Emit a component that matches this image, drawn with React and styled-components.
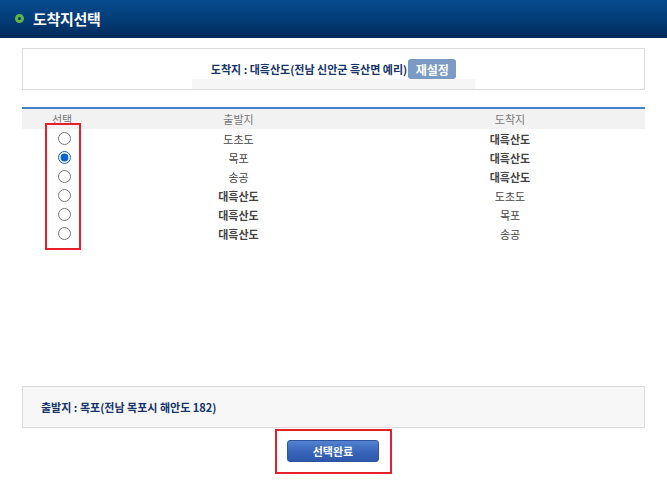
import React, { useState } from "react";
import styled, { createGlobalStyle } from "styled-components";

const GlobalStyle = createGlobalStyle`
  body {
    margin: 0;
    background: #fff;
    font-family: "Noto Sans CJK KR", "Noto Sans", sans-serif;
  }
`;

const routes = [
  { from: "도초도", to: "대흑산도", fromBold: false, toBold: true },
  { from: "목포", to: "대흑산도", fromBold: false, toBold: true },
  { from: "송공", to: "대흑산도", fromBold: false, toBold: true },
  { from: "대흑산도", to: "도초도", fromBold: true, toBold: false },
  { from: "대흑산도", to: "목포", fromBold: true, toBold: false },
  { from: "대흑산도", to: "송공", fromBold: true, toBold: false },
];

export default function App() {
  const [selected, setSelected] = useState(1);

  return (
    <Page>
      <GlobalStyle />
      <Header>
        <Dot />
        <Title>도착지선택</Title>
      </Header>

      <Content>
        <InfoBox>
          <InfoRow>
            <InfoText>도착지 : 대흑산도(전남 신안군 흑산면 예리)</InfoText>
            <ResetButton>재설정</ResetButton>
          </InfoRow>
          <InfoStrip />
        </InfoBox>

        <Table>
          <HeadRow>
            <HeadCell>선택</HeadCell>
            <HeadCell>출발지</HeadCell>
            <HeadCell>도착지</HeadCell>
          </HeadRow>
          {routes.map((r, i) => (
            <Row key={i}>
              <Cell>
                <Radio
                  type="radio"
                  name="route"
                  checked={selected === i}
                  onChange={() => setSelected(i)}
                />
              </Cell>
              <Cell $bold={r.fromBold}>{r.from}</Cell>
              <Cell $bold={r.toBold}>{r.to}</Cell>
            </Row>
          ))}
          <Highlight />
        </Table>

        <FooterBox>
          <FooterText>출발지 : 목포(전남 목포시 해안도 182)</FooterText>
        </FooterBox>

        <ButtonArea>
          <ConfirmFrame>
            <ConfirmButton>선택완료</ConfirmButton>
          </ConfirmFrame>
        </ButtonArea>
      </Content>
    </Page>
  );
}

const Page = styled.div`
  width: 667px;
  min-height: 484px;
`;

const Header = styled.div`
  height: 38px;
  display: flex;
  align-items: center;
  padding-left: 15px;
  background: linear-gradient(to bottom, #064b8e 0%, #043d78 50%, #022a5a 100%);
  box-sizing: border-box;
`;

const Dot = styled.span`
  width: 3px;
  height: 3px;
  border: 3px solid #5cb54a;
  border-radius: 50%;
  background: #0b2f55;
  margin-right: 9px;
  margin-top: -1px;
`;

const Title = styled.h1`
  margin: 0;
  font-size: 15px;
  font-weight: bold;
  color: #fff;
  letter-spacing: -0.3px;
  margin-top: -2px;
`;

const Content = styled.div`
  padding: 10px 22px 0 22px;
  display: flex;
  flex-direction: column;
`;

const InfoBox = styled.div`
  height: 42px;
  box-sizing: border-box;
  border: 1px solid #dcdcdc;
  display: flex;
  flex-direction: column;
  align-items: center;
  padding-top: 10px;
`;

const InfoRow = styled.div`
  height: 20px;
  display: flex;
  align-items: center;
  gap: 1px;
`;

const InfoText = styled.span`
  font-size: 11px;
  font-weight: bold;
  color: #15336a;
`;

const ResetButton = styled.button`
  width: 48px;
  height: 20px;
  border: 0;
  border-radius: 3px;
  background: #7b9bc4;
  color: #fff;
  font-family: inherit;
  font-size: 12px;
  font-weight: bold;
  padding: 0;
`;

const InfoStrip = styled.div`
  width: 283px;
  height: 10px;
  background: #f6f6f6;
`;

const Table = styled.div`
  position: relative;
  margin-top: 17px;
  border-top: 2px solid #4583c8;
  height: 277px;
`;

const HeadRow = styled.div`
  display: grid;
  grid-template-columns: 80px 273px 1fr;
  height: 20px;
  align-items: center;
  background: #f2f2f2;
`;

const HeadCell = styled.div`
  text-align: center;
  font-size: 11px;
  color: #777;
`;

const Row = styled.div`
  display: grid;
  grid-template-columns: 80px 273px 1fr;
  height: 19px;
  align-items: center;
`;

const Cell = styled.div`
  display: flex;
  justify-content: center;
  align-items: center;
  font-size: 11px;
  color: #444;
  font-weight: ${(p) => (p.$bold ? "bold" : "normal")};
`;

const Radio = styled.input`
  width: 13px;
  height: 13px;
  margin: 0 0 0 4px;
  accent-color: #0b63ce;
`;

const Highlight = styled.div`
  position: absolute;
  left: 23px;
  top: 14px;
  width: 36px;
  height: 127px;
  box-sizing: border-box;
  border: 2px solid #e5202a;
  pointer-events: none;
`;

const FooterBox = styled.div`
  height: 42px;
  box-sizing: border-box;
  border: 1px solid #dcdcdc;
  background: #f7f7f7;
  display: flex;
  align-items: center;
  padding-left: 18px;
`;

const FooterText = styled.span`
  font-size: 11px;
  font-weight: bold;
  color: #15336a;
`;

const ButtonArea = styled.div`
  display: flex;
  justify-content: center;
  margin-top: 1px;
`;

const ConfirmFrame = styled.div`
  border: 2px solid #e5202a;
  padding: 6px 11px 10px 10px;
`;

const ConfirmButton = styled.button`
  width: 92px;
  height: 22px;
  border: 1px solid #2d54a0;
  border-radius: 3px;
  background: linear-gradient(to bottom, #5482d0 0%, #3a67bb 50%, #2d58aa 100%);
  color: #fff;
  font-family: inherit;
  font-size: 11px;
  font-weight: bold;
  padding: 0;
`;
